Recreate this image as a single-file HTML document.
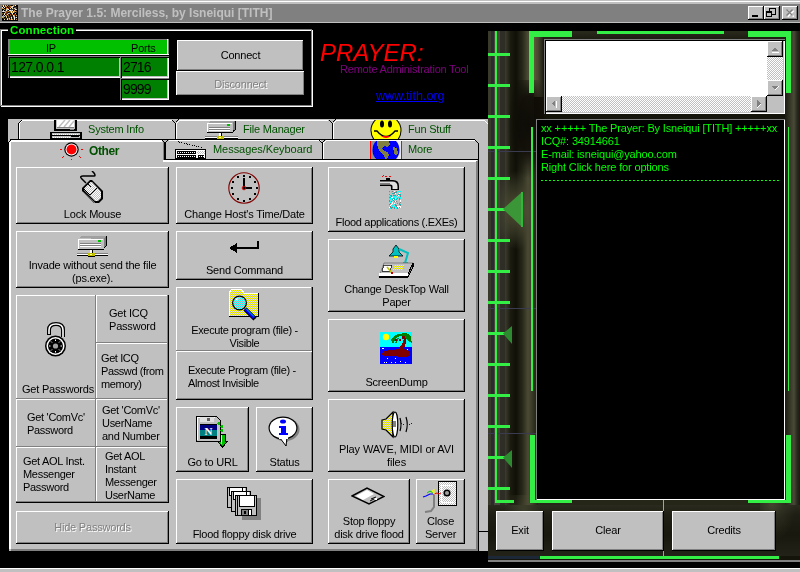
<!DOCTYPE html>
<html><head><meta charset="utf-8"><style>
html,body{margin:0;padding:0}
body{width:800px;height:572px;overflow:hidden;position:relative;background:#000;font-family:"Liberation Sans",sans-serif;font-size:11px}
body>div{position:absolute}
.t{position:absolute;will-change:transform;white-space:pre;line-height:13px;color:#000;letter-spacing:-0.2px}
.btn{background:#c0c0c0;box-shadow:inset -1px -1px 0 #000,inset 1px 1px 0 #fff,inset -2px -2px 0 #808080}
.cell{background:#c0c0c0;box-shadow:inset -1px -1px 0 #808080,inset 1px 1px 0 #fff}
.sunk{box-shadow:inset 1px 1px 0 #808080,inset 2px 2px 0 #000,inset -1px -1px 0 #fff,inset -2px -2px 0 #c0c0c0}
</style></head><body>
<div style="left:0px;top:0px;width:800px;height:1px;background:#c0c0c0;"></div>
<div style="left:0px;top:1px;width:800px;height:1px;background:#ffffff;"></div>
<div style="left:0px;top:2px;width:800px;height:2px;background:#c0c0c0;"></div>
<div style="left:0px;top:4px;width:800px;height:18px;background:#808080;"></div>
<div style="left:0px;top:22px;width:800px;height:1px;background:#c0c0c0;"></div>
<div style="left:0px;top:568px;width:800px;height:1px;background:#ffffff;"></div>
<div style="left:0px;top:569px;width:800px;height:3px;background:#c0c0c0;"></div>
<svg style="position:absolute;left:2px;top:5px" width="16" height="16" viewBox="0 0 16 16" shape-rendering="crispEdges"><rect width="16" height="16" fill="#000"/><rect x="0" y="0" width="1" height="1" fill="#7a5a20"/><rect x="0" y="1" width="1" height="1" fill="#1a1008"/><rect x="0" y="2" width="1" height="1" fill="#f0f0f0"/><rect x="0" y="3" width="1" height="1" fill="#d09030"/><rect x="0" y="4" width="1" height="1" fill="#000000"/><rect x="0" y="5" width="1" height="1" fill="#000000"/><rect x="0" y="6" width="1" height="1" fill="#c0c0c0"/><rect x="0" y="7" width="1" height="1" fill="#000000"/><rect x="0" y="8" width="1" height="1" fill="#7a5a20"/><rect x="0" y="9" width="1" height="1" fill="#402810"/><rect x="0" y="10" width="1" height="1" fill="#000000"/><rect x="0" y="11" width="1" height="1" fill="#c0c0c0"/><rect x="0" y="12" width="1" height="1" fill="#c8b048"/><rect x="0" y="13" width="1" height="1" fill="#000000"/><rect x="0" y="14" width="1" height="1" fill="#000000"/><rect x="1" y="0" width="1" height="1" fill="#f0f0f0"/><rect x="1" y="1" width="1" height="1" fill="#f0f0f0"/><rect x="1" y="2" width="1" height="1" fill="#000000"/><rect x="1" y="3" width="1" height="1" fill="#c8b048"/><rect x="1" y="4" width="1" height="1" fill="#000000"/><rect x="1" y="5" width="1" height="1" fill="#c0c0c0"/><rect x="1" y="6" width="1" height="1" fill="#f0f0f0"/><rect x="1" y="7" width="1" height="1" fill="#000000"/><rect x="1" y="8" width="1" height="1" fill="#402810"/><rect x="1" y="9" width="1" height="1" fill="#000000"/><rect x="1" y="10" width="1" height="1" fill="#c8b048"/><rect x="1" y="11" width="1" height="1" fill="#d09030"/><rect x="1" y="12" width="1" height="1" fill="#d09030"/><rect x="1" y="13" width="1" height="1" fill="#402810"/><rect x="1" y="14" width="1" height="1" fill="#000000"/><rect x="2" y="0" width="1" height="1" fill="#402810"/><rect x="2" y="1" width="1" height="1" fill="#402810"/><rect x="2" y="2" width="1" height="1" fill="#f0f0f0"/><rect x="2" y="3" width="1" height="1" fill="#000000"/><rect x="2" y="4" width="1" height="1" fill="#c8b048"/><rect x="2" y="5" width="1" height="1" fill="#000000"/><rect x="2" y="6" width="1" height="1" fill="#c0c0c0"/><rect x="2" y="7" width="1" height="1" fill="#1a1008"/><rect x="2" y="8" width="1" height="1" fill="#e8e0a0"/><rect x="2" y="9" width="1" height="1" fill="#f0f0f0"/><rect x="2" y="10" width="1" height="1" fill="#1a1008"/><rect x="2" y="11" width="1" height="1" fill="#c0c0c0"/><rect x="2" y="12" width="1" height="1" fill="#000000"/><rect x="2" y="13" width="1" height="1" fill="#402810"/><rect x="2" y="14" width="1" height="1" fill="#e8e0a0"/><rect x="3" y="0" width="1" height="1" fill="#c0c0c0"/><rect x="3" y="1" width="1" height="1" fill="#d09030"/><rect x="3" y="2" width="1" height="1" fill="#1a1008"/><rect x="3" y="3" width="1" height="1" fill="#000000"/><rect x="3" y="4" width="1" height="1" fill="#402810"/><rect x="3" y="5" width="1" height="1" fill="#402810"/><rect x="3" y="6" width="1" height="1" fill="#d09030"/><rect x="3" y="7" width="1" height="1" fill="#c8b048"/><rect x="3" y="8" width="1" height="1" fill="#7a5a20"/><rect x="3" y="9" width="1" height="1" fill="#000000"/><rect x="3" y="10" width="1" height="1" fill="#c0c0c0"/><rect x="3" y="11" width="1" height="1" fill="#303040"/><rect x="3" y="12" width="1" height="1" fill="#000000"/><rect x="3" y="13" width="1" height="1" fill="#402810"/><rect x="3" y="14" width="1" height="1" fill="#000000"/><rect x="4" y="0" width="1" height="1" fill="#402810"/><rect x="4" y="1" width="1" height="1" fill="#c8b048"/><rect x="4" y="2" width="1" height="1" fill="#a03010"/><rect x="4" y="3" width="1" height="1" fill="#d09030"/><rect x="4" y="4" width="1" height="1" fill="#c0c0c0"/><rect x="4" y="5" width="1" height="1" fill="#f0f0f0"/><rect x="4" y="6" width="1" height="1" fill="#7a5a20"/><rect x="4" y="7" width="1" height="1" fill="#a03010"/><rect x="4" y="8" width="1" height="1" fill="#402810"/><rect x="4" y="9" width="1" height="1" fill="#a03010"/><rect x="4" y="10" width="1" height="1" fill="#7a5a20"/><rect x="4" y="11" width="1" height="1" fill="#e8e0a0"/><rect x="4" y="12" width="1" height="1" fill="#c8b048"/><rect x="4" y="13" width="1" height="1" fill="#1a1008"/><rect x="4" y="14" width="1" height="1" fill="#303040"/><rect x="5" y="0" width="1" height="1" fill="#c8b048"/><rect x="5" y="1" width="1" height="1" fill="#000000"/><rect x="5" y="2" width="1" height="1" fill="#402810"/><rect x="5" y="3" width="1" height="1" fill="#e8e0a0"/><rect x="5" y="4" width="1" height="1" fill="#c0c0c0"/><rect x="5" y="5" width="1" height="1" fill="#a03010"/><rect x="5" y="6" width="1" height="1" fill="#7a5a20"/><rect x="5" y="7" width="1" height="1" fill="#303040"/><rect x="5" y="8" width="1" height="1" fill="#a03010"/><rect x="5" y="9" width="1" height="1" fill="#e8e0a0"/><rect x="5" y="10" width="1" height="1" fill="#402810"/><rect x="5" y="11" width="1" height="1" fill="#000000"/><rect x="5" y="12" width="1" height="1" fill="#000000"/><rect x="5" y="13" width="1" height="1" fill="#c0c0c0"/><rect x="5" y="14" width="1" height="1" fill="#f0f0f0"/><rect x="6" y="0" width="1" height="1" fill="#1a1008"/><rect x="6" y="1" width="1" height="1" fill="#7a5a20"/><rect x="6" y="2" width="1" height="1" fill="#1a1008"/><rect x="6" y="3" width="1" height="1" fill="#a03010"/><rect x="6" y="4" width="1" height="1" fill="#f0f0f0"/><rect x="6" y="5" width="1" height="1" fill="#000000"/><rect x="6" y="6" width="1" height="1" fill="#d09030"/><rect x="6" y="7" width="1" height="1" fill="#000000"/><rect x="6" y="8" width="1" height="1" fill="#c0c0c0"/><rect x="6" y="9" width="1" height="1" fill="#402810"/><rect x="6" y="10" width="1" height="1" fill="#7a5a20"/><rect x="6" y="11" width="1" height="1" fill="#7a5a20"/><rect x="6" y="12" width="1" height="1" fill="#303040"/><rect x="6" y="13" width="1" height="1" fill="#7a5a20"/><rect x="6" y="14" width="1" height="1" fill="#402810"/><rect x="7" y="0" width="1" height="1" fill="#a03010"/><rect x="7" y="1" width="1" height="1" fill="#402810"/><rect x="7" y="2" width="1" height="1" fill="#a03010"/><rect x="7" y="3" width="1" height="1" fill="#000000"/><rect x="7" y="4" width="1" height="1" fill="#000000"/><rect x="7" y="5" width="1" height="1" fill="#e8e0a0"/><rect x="7" y="6" width="1" height="1" fill="#a03010"/><rect x="7" y="7" width="1" height="1" fill="#303040"/><rect x="7" y="8" width="1" height="1" fill="#d09030"/><rect x="7" y="9" width="1" height="1" fill="#000000"/><rect x="7" y="10" width="1" height="1" fill="#000000"/><rect x="7" y="11" width="1" height="1" fill="#303040"/><rect x="7" y="12" width="1" height="1" fill="#303040"/><rect x="7" y="13" width="1" height="1" fill="#e8e0a0"/><rect x="7" y="14" width="1" height="1" fill="#d09030"/><rect x="8" y="0" width="1" height="1" fill="#402810"/><rect x="8" y="1" width="1" height="1" fill="#d09030"/><rect x="8" y="2" width="1" height="1" fill="#a03010"/><rect x="8" y="3" width="1" height="1" fill="#e8e0a0"/><rect x="8" y="4" width="1" height="1" fill="#303040"/><rect x="8" y="5" width="1" height="1" fill="#f0f0f0"/><rect x="8" y="6" width="1" height="1" fill="#d09030"/><rect x="8" y="7" width="1" height="1" fill="#7a5a20"/><rect x="8" y="8" width="1" height="1" fill="#000000"/><rect x="8" y="9" width="1" height="1" fill="#a03010"/><rect x="8" y="10" width="1" height="1" fill="#7a5a20"/><rect x="8" y="11" width="1" height="1" fill="#1a1008"/><rect x="8" y="12" width="1" height="1" fill="#402810"/><rect x="8" y="13" width="1" height="1" fill="#000000"/><rect x="8" y="14" width="1" height="1" fill="#a03010"/><rect x="9" y="0" width="1" height="1" fill="#000000"/><rect x="9" y="1" width="1" height="1" fill="#c8b048"/><rect x="9" y="2" width="1" height="1" fill="#e8e0a0"/><rect x="9" y="3" width="1" height="1" fill="#1a1008"/><rect x="9" y="4" width="1" height="1" fill="#303040"/><rect x="9" y="5" width="1" height="1" fill="#c8b048"/><rect x="9" y="6" width="1" height="1" fill="#f0f0f0"/><rect x="9" y="7" width="1" height="1" fill="#f0f0f0"/><rect x="9" y="8" width="1" height="1" fill="#a03010"/><rect x="9" y="9" width="1" height="1" fill="#000000"/><rect x="9" y="10" width="1" height="1" fill="#1a1008"/><rect x="9" y="11" width="1" height="1" fill="#a03010"/><rect x="9" y="12" width="1" height="1" fill="#f0f0f0"/><rect x="9" y="13" width="1" height="1" fill="#c0c0c0"/><rect x="9" y="14" width="1" height="1" fill="#e8e0a0"/><rect x="10" y="0" width="1" height="1" fill="#1a1008"/><rect x="10" y="1" width="1" height="1" fill="#f0f0f0"/><rect x="10" y="2" width="1" height="1" fill="#c0c0c0"/><rect x="10" y="3" width="1" height="1" fill="#e8e0a0"/><rect x="10" y="4" width="1" height="1" fill="#303040"/><rect x="10" y="5" width="1" height="1" fill="#f0f0f0"/><rect x="10" y="6" width="1" height="1" fill="#7a5a20"/><rect x="10" y="7" width="1" height="1" fill="#d09030"/><rect x="10" y="8" width="1" height="1" fill="#f0f0f0"/><rect x="10" y="9" width="1" height="1" fill="#c8b048"/><rect x="10" y="10" width="1" height="1" fill="#1a1008"/><rect x="10" y="11" width="1" height="1" fill="#000000"/><rect x="10" y="12" width="1" height="1" fill="#1a1008"/><rect x="10" y="13" width="1" height="1" fill="#1a1008"/><rect x="10" y="14" width="1" height="1" fill="#c8b048"/><rect x="11" y="0" width="1" height="1" fill="#d09030"/><rect x="11" y="1" width="1" height="1" fill="#c8b048"/><rect x="11" y="2" width="1" height="1" fill="#000000"/><rect x="11" y="3" width="1" height="1" fill="#a03010"/><rect x="11" y="4" width="1" height="1" fill="#402810"/><rect x="11" y="5" width="1" height="1" fill="#1a1008"/><rect x="11" y="6" width="1" height="1" fill="#e8e0a0"/><rect x="11" y="7" width="1" height="1" fill="#e8e0a0"/><rect x="11" y="8" width="1" height="1" fill="#000000"/><rect x="11" y="9" width="1" height="1" fill="#1a1008"/><rect x="11" y="10" width="1" height="1" fill="#f0f0f0"/><rect x="11" y="11" width="1" height="1" fill="#c0c0c0"/><rect x="11" y="12" width="1" height="1" fill="#7a5a20"/><rect x="11" y="13" width="1" height="1" fill="#402810"/><rect x="11" y="14" width="1" height="1" fill="#402810"/><rect x="12" y="0" width="1" height="1" fill="#7a5a20"/><rect x="12" y="1" width="1" height="1" fill="#1a1008"/><rect x="12" y="2" width="1" height="1" fill="#303040"/><rect x="12" y="3" width="1" height="1" fill="#c0c0c0"/><rect x="12" y="4" width="1" height="1" fill="#402810"/><rect x="12" y="5" width="1" height="1" fill="#d09030"/><rect x="12" y="6" width="1" height="1" fill="#d09030"/><rect x="12" y="7" width="1" height="1" fill="#303040"/><rect x="12" y="8" width="1" height="1" fill="#000000"/><rect x="12" y="9" width="1" height="1" fill="#a03010"/><rect x="12" y="10" width="1" height="1" fill="#d09030"/><rect x="12" y="11" width="1" height="1" fill="#c0c0c0"/><rect x="12" y="12" width="1" height="1" fill="#f0f0f0"/><rect x="12" y="13" width="1" height="1" fill="#f0f0f0"/><rect x="12" y="14" width="1" height="1" fill="#f0f0f0"/><rect x="13" y="0" width="1" height="1" fill="#f0f0f0"/><rect x="13" y="1" width="1" height="1" fill="#000000"/><rect x="13" y="2" width="1" height="1" fill="#a03010"/><rect x="13" y="3" width="1" height="1" fill="#d09030"/><rect x="13" y="4" width="1" height="1" fill="#f0f0f0"/><rect x="13" y="5" width="1" height="1" fill="#000000"/><rect x="13" y="6" width="1" height="1" fill="#c8b048"/><rect x="13" y="7" width="1" height="1" fill="#000000"/><rect x="13" y="8" width="1" height="1" fill="#c8b048"/><rect x="13" y="9" width="1" height="1" fill="#a03010"/><rect x="13" y="10" width="1" height="1" fill="#1a1008"/><rect x="13" y="11" width="1" height="1" fill="#000000"/><rect x="13" y="12" width="1" height="1" fill="#7a5a20"/><rect x="13" y="13" width="1" height="1" fill="#402810"/><rect x="13" y="14" width="1" height="1" fill="#000000"/><rect x="14" y="0" width="1" height="1" fill="#000000"/><rect x="14" y="1" width="1" height="1" fill="#000000"/><rect x="14" y="2" width="1" height="1" fill="#402810"/><rect x="14" y="3" width="1" height="1" fill="#1a1008"/><rect x="14" y="4" width="1" height="1" fill="#c0c0c0"/><rect x="14" y="5" width="1" height="1" fill="#000000"/><rect x="14" y="6" width="1" height="1" fill="#7a5a20"/><rect x="14" y="7" width="1" height="1" fill="#402810"/><rect x="14" y="8" width="1" height="1" fill="#000000"/><rect x="14" y="9" width="1" height="1" fill="#000000"/><rect x="14" y="10" width="1" height="1" fill="#c8b048"/><rect x="14" y="11" width="1" height="1" fill="#402810"/><rect x="14" y="12" width="1" height="1" fill="#f0f0f0"/><rect x="14" y="13" width="1" height="1" fill="#1a1008"/><rect x="14" y="14" width="1" height="1" fill="#d09030"/></svg>
<div class="t" style="left:21px;top:6px;font-weight:bold;font-size:12px;color:#c0c0c0;letter-spacing:0;line-height:15px">The Prayer 1.5: Merciless, by Isneiqui [TITH]</div>
<div class="btn" style="left:748px;top:6px;width:16px;height:14px"></div>
<div class="btn" style="left:764px;top:6px;width:16px;height:14px"></div>
<div class="btn" style="left:782px;top:6px;width:16px;height:14px"></div>
<svg style="position:absolute;left:748px;top:6px" width="16" height="14" viewBox="0 0 16 14" shape-rendering="crispEdges"><rect x="4" y="9" width="6" height="2" fill="#000"/></svg>
<svg style="position:absolute;left:764px;top:6px" width="16" height="14" viewBox="0 0 16 14" shape-rendering="crispEdges"><rect x="5" y="2" width="6" height="6" fill="none" stroke="#000" stroke-width="1" transform="translate(0.5,0.5)"/><rect x="5" y="2" width="6" height="1" fill="#000"/><rect x="2" y="5" width="6" height="6" fill="#c0c0c0"/><rect x="2.5" y="5.5" width="5" height="5" fill="none" stroke="#000"/><rect x="2" y="5" width="6" height="2" fill="#000"/></svg>
<svg style="position:absolute;left:782px;top:6px" width="16" height="14" viewBox="0 0 16 14" shape-rendering="crispEdges"><path d="M5 4 L11 10 M11 4 L5 10" stroke="#fff" stroke-width="1.4" transform="translate(0.8,0.8)" shape-rendering="auto"/><path d="M4 3 L10 9 M10 3 L4 9" stroke="#808080" stroke-width="1.4" shape-rendering="auto" transform="translate(0.5,0.5)"/></svg>
<div style="left:0px;top:29px;width:312px;height:1px;background:#808080;"></div>
<div style="left:1px;top:30px;width:312px;height:1px;background:#ffffff;"></div>
<div style="left:0px;top:29px;width:1px;height:77px;background:#808080;"></div>
<div style="left:1px;top:30px;width:1px;height:77px;background:#ffffff;"></div>
<div style="left:311px;top:29px;width:1px;height:77px;background:#808080;"></div>
<div style="left:312px;top:30px;width:1px;height:77px;background:#ffffff;"></div>
<div style="left:0px;top:105px;width:312px;height:1px;background:#808080;"></div>
<div style="left:1px;top:106px;width:312px;height:1px;background:#ffffff;"></div>
<div style="left:8px;top:24px;width:68px;height:12px;background:#000;"></div>
<div class="t" style="left:10px;top:24px;font-weight:bold;font-size:11.5px;color:#00ff00;letter-spacing:0.1px;line-height:13px">Connection</div>
<div style="left:8px;top:39px;width:161px;height:16px;background:#808080;"></div>
<div style="left:10px;top:40px;width:157px;height:14px;background:#00c000;"></div>
<div style="left:8px;top:54px;width:161px;height:1px;background:#ffffff;"></div>
<div style="left:167px;top:39px;width:1px;height:16px;background:#ffffff;"></div>
<div class="t" style="left:46px;top:42px;color:#000">IP</div>
<div class="t" style="left:131px;top:42px;color:#000">Ports</div>
<div class="sunk" style="left:8px;top:56px;width:113px;height:22px;background:#008000"></div>
<div class="sunk" style="left:120px;top:56px;width:49px;height:22px;background:#008000"></div>
<div class="sunk" style="left:120px;top:78px;width:49px;height:22px;background:#008000"></div>
<div class="t" style="left:11px;top:60px;font-size:14px;line-height:15px;letter-spacing:-0.6px">127.0.0.1</div>
<div class="t" style="left:123px;top:60px;font-size:14px;line-height:15px;letter-spacing:-0.9px">2716</div>
<div class="t" style="left:123px;top:82px;font-size:14px;line-height:15px;letter-spacing:-0.9px">9999</div>
<div class="btn" style="left:177px;top:40px;width:127px;height:31px"></div>
<div class="t" style="left:177px;top:49px;width:127px;text-align:center;">Connect</div>
<div class="btn" style="left:176px;top:71px;width:129px;height:25px"></div>
<div class="t" style="left:176px;top:78px;width:129px;text-align:center;color:#808080;text-shadow:1px 1px 0 #fff">Disconnect</div>
<div class="t" style="left:320px;top:40px;font-size:24px;font-style:italic;color:#ff0000;line-height:26px;letter-spacing:0">PRAYER:</div>
<div class="t" style="left:340px;top:63px;color:#800080;font-size:11px;letter-spacing:-0.2px">Remote Administration Tool</div>
<div class="t" style="left:376px;top:89px;color:#0000ff;font-size:12.6px;line-height:14px;text-decoration:underline;letter-spacing:0">www.tith.org</div>
<div style="left:8px;top:119px;width:481px;height:432px;background:#c0c0c0;"></div>
<div style="left:21px;top:120px;width:1px;height:1px;background:#000;"></div>
<div style="left:20px;top:121px;width:1px;height:1px;background:#000;"></div>
<div style="left:19px;top:122px;width:1px;height:1px;background:#000;"></div>
<div style="left:18px;top:123px;width:1px;height:16px;background:#000;"></div>
<div style="left:22px;top:120px;width:1px;height:1px;background:#fff;"></div>
<div style="left:21px;top:121px;width:1px;height:1px;background:#fff;"></div>
<div style="left:20px;top:122px;width:1px;height:1px;background:#fff;"></div>
<div style="left:19px;top:123px;width:1px;height:16px;background:#fff;"></div>
<div style="left:22px;top:120px;width:150px;height:1px;background:#fff;"></div>
<div style="left:175px;top:123px;width:1px;height:16px;background:#000;"></div>
<div style="left:176px;top:123px;width:1px;height:16px;background:#fff;"></div>
<div style="left:172px;top:120px;width:1px;height:1px;background:#000;"></div>
<div style="left:173px;top:121px;width:1px;height:1px;background:#000;"></div>
<div style="left:174px;top:122px;width:1px;height:1px;background:#000;"></div>
<div style="left:179px;top:120px;width:1px;height:1px;background:#fff;"></div>
<div style="left:178px;top:121px;width:1px;height:1px;background:#fff;"></div>
<div style="left:177px;top:122px;width:1px;height:1px;background:#fff;"></div>
<div style="left:178px;top:119px;width:1px;height:1px;background:#000;"></div>
<div style="left:177px;top:120px;width:1px;height:1px;background:#000;"></div>
<div style="left:176px;top:121px;width:1px;height:1px;background:#000;"></div>
<div style="left:180px;top:120px;width:148px;height:1px;background:#fff;"></div>
<div style="left:332px;top:123px;width:1px;height:16px;background:#000;"></div>
<div style="left:333px;top:123px;width:1px;height:16px;background:#fff;"></div>
<div style="left:329px;top:120px;width:1px;height:1px;background:#000;"></div>
<div style="left:330px;top:121px;width:1px;height:1px;background:#000;"></div>
<div style="left:331px;top:122px;width:1px;height:1px;background:#000;"></div>
<div style="left:336px;top:120px;width:1px;height:1px;background:#fff;"></div>
<div style="left:335px;top:121px;width:1px;height:1px;background:#fff;"></div>
<div style="left:334px;top:122px;width:1px;height:1px;background:#fff;"></div>
<div style="left:335px;top:119px;width:1px;height:1px;background:#000;"></div>
<div style="left:334px;top:120px;width:1px;height:1px;background:#000;"></div>
<div style="left:333px;top:121px;width:1px;height:1px;background:#000;"></div>
<div style="left:337px;top:120px;width:147px;height:1px;background:#fff;"></div>
<div style="left:484px;top:120px;width:1px;height:1px;background:#fff;"></div>
<div style="left:485px;top:121px;width:1px;height:1px;background:#fff;"></div>
<div style="left:486px;top:122px;width:1px;height:1px;background:#fff;"></div>
<div style="left:487px;top:123px;width:1px;height:1px;background:#fff;"></div>
<div style="left:10px;top:139px;width:465px;height:1px;background:#000;"></div>
<div style="left:8px;top:143px;width:1px;height:408px;background:#000;"></div>
<div style="left:8px;top:142px;width:1px;height:1px;background:#000;"></div>
<div style="left:9px;top:141px;width:1px;height:1px;background:#000;"></div>
<div style="left:10px;top:140px;width:1px;height:1px;background:#000;"></div>
<div style="left:11px;top:139px;width:1px;height:1px;background:#000;"></div>
<div style="left:12px;top:140px;width:150px;height:2px;background:#fff;"></div>
<div style="left:9px;top:142px;width:1px;height:1px;background:#fff;"></div>
<div style="left:10px;top:141px;width:1px;height:1px;background:#fff;"></div>
<div style="left:11px;top:140px;width:1px;height:1px;background:#fff;"></div>
<div style="left:10px;top:142px;width:1px;height:1px;background:#fff;"></div>
<div style="left:11px;top:141px;width:1px;height:1px;background:#fff;"></div>
<div style="left:9px;top:143px;width:2px;height:406px;background:#fff;"></div>
<div style="left:163px;top:142px;width:1px;height:19px;background:#808080;"></div>
<div style="left:164px;top:142px;width:1px;height:18px;background:#000;"></div>
<div style="left:161px;top:139px;width:1px;height:1px;background:#000;"></div>
<div style="left:162px;top:140px;width:1px;height:1px;background:#000;"></div>
<div style="left:163px;top:141px;width:1px;height:1px;background:#000;"></div>
<div style="left:168px;top:139px;width:1px;height:1px;background:#000;"></div>
<div style="left:167px;top:140px;width:1px;height:1px;background:#000;"></div>
<div style="left:166px;top:141px;width:1px;height:1px;background:#000;"></div>
<div style="left:165px;top:142px;width:1px;height:18px;background:#000;"></div>
<div style="left:169px;top:140px;width:152px;height:1px;background:#fff;"></div>
<div style="left:322px;top:142px;width:1px;height:18px;background:#000;"></div>
<div style="left:323px;top:142px;width:1px;height:18px;background:#fff;"></div>
<div style="left:319px;top:140px;width:1px;height:1px;background:#000;"></div>
<div style="left:320px;top:141px;width:1px;height:1px;background:#000;"></div>
<div style="left:321px;top:142px;width:1px;height:1px;background:#000;"></div>
<div style="left:326px;top:140px;width:1px;height:1px;background:#fff;"></div>
<div style="left:325px;top:141px;width:1px;height:1px;background:#fff;"></div>
<div style="left:324px;top:142px;width:1px;height:1px;background:#fff;"></div>
<div style="left:325px;top:139px;width:1px;height:1px;background:#000;"></div>
<div style="left:324px;top:140px;width:1px;height:1px;background:#000;"></div>
<div style="left:323px;top:141px;width:1px;height:1px;background:#000;"></div>
<div style="left:327px;top:140px;width:148px;height:1px;background:#fff;"></div>
<div style="left:475px;top:140px;width:1px;height:1px;background:#000;"></div>
<div style="left:476px;top:141px;width:1px;height:1px;background:#000;"></div>
<div style="left:477px;top:142px;width:1px;height:1px;background:#000;"></div>
<div style="left:478px;top:143px;width:1px;height:17px;background:#000;"></div>
<div style="left:165px;top:159px;width:314px;height:1px;background:#000;"></div>
<div style="left:163px;top:160px;width:314px;height:2px;background:#fff;"></div>
<div style="left:11px;top:549px;width:466px;height:2px;background:#808080;"></div>
<div style="left:9px;top:551px;width:470px;height:1px;background:#000;"></div>
<div style="left:476px;top:161px;width:2px;height:390px;background:#808080;"></div>
<div style="left:478px;top:160px;width:1px;height:392px;background:#000;"></div>
<div style="left:479px;top:531px;width:10px;height:1px;background:#000;"></div>
<div style="left:479px;top:552px;width:10px;height:1px;background:#000;"></div>
<div class="t" style="left:88px;top:123px;color:#005000">System Info</div>
<div class="t" style="left:243px;top:123px;color:#005000">File Manager</div>
<div class="t" style="left:408px;top:123px;color:#005000">Fun Stuff</div>
<div class="t" style="left:89px;top:145px;color:#005000;font-weight:bold;font-size:12px;letter-spacing:-0.4px">Other</div>
<div class="t" style="left:213px;top:143px;color:#005000;letter-spacing:-0.05px">Messages/Keyboard</div>
<div class="t" style="left:408px;top:143px;color:#005000">More</div>
<div class="btn" style="left:16px;top:167px;width:153px;height:57px"></div>
<div class="t" style="left:16px;top:208px;width:153px;text-align:center;">Lock Mouse</div>
<div class="btn" style="left:16px;top:231px;width:153px;height:57px"></div>
<div class="t" style="left:16px;top:259px;width:153px;text-align:center;">Invade without send the file
(ps.exe).</div>
<div class="btn" style="left:16px;top:295px;width:153px;height:208px"></div>
<div class="cell" style="left:16px;top:295px;width:80px;height:104px"></div>
<div class="cell" style="left:96px;top:295px;width:72px;height:48px"></div>
<div class="cell" style="left:96px;top:343px;width:72px;height:56px"></div>
<div class="cell" style="left:16px;top:399px;width:80px;height:48px"></div>
<div class="cell" style="left:96px;top:399px;width:72px;height:48px"></div>
<div class="cell" style="left:16px;top:447px;width:80px;height:55px"></div>
<div class="cell" style="left:96px;top:447px;width:72px;height:55px"></div>
<div style="left:16px;top:502px;width:153px;height:1px;background:#000;"></div>
<div style="left:168px;top:295px;width:1px;height:208px;background:#000;"></div>
<div class="t" style="left:22px;top:383px;">Get Passwords</div>
<div class="t" style="left:109px;top:307px;">Get ICQ
Password</div>
<div class="t" style="left:101px;top:352px;letter-spacing:-0.4px">Get ICQ
Passwd (from
memory)</div>
<div class="t" style="left:27px;top:411px;letter-spacing:-0.3px">Get 'ComVc'
Password</div>
<div class="t" style="left:102px;top:404px;letter-spacing:-0.3px">Get 'ComVc'
UserName
and Number</div>
<div class="t" style="left:23px;top:455px;letter-spacing:-0.3px">Get AOL Inst.
Messenger
Password</div>
<div class="t" style="left:105px;top:450px;letter-spacing:-0.3px">Get AOL
Instant
Messenger
UserName</div>
<div class="btn" style="left:16px;top:511px;width:153px;height:33px"></div>
<div class="t" style="left:16px;top:521px;width:153px;text-align:center;color:#808080;text-shadow:1px 1px 0 #fff">Hide Passwords</div>
<div class="btn" style="left:176px;top:167px;width:137px;height:57px"></div>
<div class="t" style="left:176px;top:208px;width:137px;text-align:center;">Change Host's Time/Date</div>
<div class="btn" style="left:176px;top:231px;width:137px;height:49px"></div>
<div class="t" style="left:176px;top:264px;width:137px;text-align:center;">Send Command</div>
<div class="btn" style="left:176px;top:287px;width:137px;height:113px"></div>
<div class="cell" style="left:176px;top:287px;width:136px;height:64px"></div>
<div style="left:176px;top:350px;width:136px;height:1px;background:#808080;"></div>
<div style="left:176px;top:351px;width:136px;height:1px;background:#fff;"></div>
<div class="t" style="left:176px;top:324px;width:137px;text-align:center;letter-spacing:-0.35px">Execute program (file) -
Visible</div>
<div class="t" style="left:188px;top:364px;letter-spacing:-0.35px">Execute Program (file) -
Almost Invisible</div>
<div class="btn" style="left:176px;top:407px;width:73px;height:65px"></div>
<div class="t" style="left:176px;top:456px;width:73px;text-align:center;">Go to URL</div>
<div class="btn" style="left:256px;top:407px;width:57px;height:65px"></div>
<div class="t" style="left:256px;top:456px;width:57px;text-align:center;">Status</div>
<div class="btn" style="left:176px;top:479px;width:137px;height:65px"></div>
<div class="t" style="left:176px;top:528px;width:137px;text-align:center;letter-spacing:-0.25px">Flood floppy disk drive</div>
<div class="btn" style="left:328px;top:167px;width:137px;height:65px"></div>
<div class="t" style="left:328px;top:216px;width:137px;text-align:center;letter-spacing:-0.3px">Flood applications (.EXEs)</div>
<div class="btn" style="left:328px;top:239px;width:137px;height:73px"></div>
<div class="t" style="left:328px;top:283px;width:137px;text-align:center;">Change DeskTop Wall
Paper</div>
<div class="btn" style="left:328px;top:319px;width:137px;height:73px"></div>
<div class="t" style="left:328px;top:376px;width:137px;text-align:center;">ScreenDump</div>
<div class="btn" style="left:328px;top:399px;width:137px;height:73px"></div>
<div class="t" style="left:328px;top:443px;width:137px;text-align:center;letter-spacing:-0.1px">Play WAVE, MIDI or AVI
files</div>
<div class="btn" style="left:328px;top:479px;width:82px;height:65px"></div>
<div class="t" style="left:328px;top:515px;width:82px;text-align:center;letter-spacing:-0.25px">Stop floppy
disk drive flood</div>
<div class="btn" style="left:416px;top:479px;width:49px;height:65px"></div>
<div class="t" style="left:416px;top:515px;width:49px;text-align:center;">Close
Server</div>
<div style="left:488px;top:31px;width:312px;height:529px;background:#14140a;"></div>
<div style="left:488px;top:31px;width:22px;height:474px;background:linear-gradient(90deg,#3a3a2c 0,#3a3a2c 3px,#2a2a30 3px,#2a2a30 6px,#46463a 6px,#46463a 12px,#2e2e26 12px,#2e2e26 17px,#3c3c2e 17px,#1e1e16 22px);"></div>
<div style="left:510px;top:31px;width:22px;height:474px;background:linear-gradient(90deg,#1c1c10 0,#101008 6px,#262618 12px,#4a4a34 18px,#3a3a28 22px);"></div>
<div style="left:532px;top:31px;width:6px;height:474px;background:linear-gradient(90deg,#3a3a28,#1a1a10);"></div>
<div style="left:785px;top:31px;width:15px;height:474px;background:linear-gradient(90deg,#1a1a10 0,#3c3c2c 6px,#4a4a38 9px,#2a2a20 12px,#1a1a12 15px);"></div>
<div style="left:538px;top:31px;width:247px;height:9px;background:linear-gradient(180deg,#2a2a1c,#1a1a10);"></div>
<div style="left:488px;top:505px;width:312px;height:51px;background:linear-gradient(180deg,#2a2a1e 0,#1e1e14 10px,#18180e 30px,#222218 51px);"></div>
<div style="left:538px;top:499px;width:247px;height:6px;background:#262618;"></div>
<div style="left:534px;top:37px;width:10px;height:60px;background:linear-gradient(90deg,#5c5838 0,#4a4632 4px,#2a2a1c 8px,#141410 10px);"></div>
<div style="left:534px;top:97px;width:10px;height:22px;background:#141008;"></div>
<div style="left:506px;top:80px;width:40px;height:110px;background:radial-gradient(ellipse 50% 50% at 55% 40%,rgba(14,12,6,1) 0,rgba(14,12,6,0.9) 50%,rgba(14,12,6,0) 100%)"></div>
<div style="left:492px;top:170px;width:42px;height:80px;background:radial-gradient(ellipse at 60% 50%,rgba(90,90,60,0.85) 0,rgba(70,70,50,0.5) 45%,rgba(0,0,0,0) 70%)"></div>
<div style="left:488px;top:151px;width:50px;height:1px;background:#3a3a50;"></div>
<div style="left:760px;top:470px;width:40px;height:80px;background:radial-gradient(ellipse 60% 50% at 30% 40%,rgba(80,80,56,0.7) 0,rgba(60,60,44,0.4) 50%,rgba(0,0,0,0) 100%)"></div>
<div style="left:500px;top:495px;width:40px;height:60px;background:radial-gradient(ellipse 50% 50% at 60% 30%,rgba(80,80,56,0.6) 0,rgba(0,0,0,0) 100%)"></div>
<div style="left:488px;top:308px;width:50px;height:1px;background:#3a3a50;"></div>
<div style="left:488px;top:433px;width:50px;height:1px;background:#3a3a50;"></div>
<div style="left:495px;top:31px;width:2px;height:472px;background:#33ee44;"></div>
<div style="left:488px;top:53px;width:22px;height:3px;background:#33ee44;"></div>
<div style="left:488px;top:84px;width:22px;height:3px;background:#33ee44;"></div>
<div style="left:488px;top:115px;width:22px;height:3px;background:#33ee44;"></div>
<div style="left:488px;top:146px;width:22px;height:3px;background:#33ee44;"></div>
<div style="left:488px;top:177px;width:22px;height:3px;background:#33ee44;"></div>
<div style="left:488px;top:208px;width:22px;height:3px;background:#33ee44;"></div>
<div style="left:488px;top:239px;width:22px;height:3px;background:#33ee44;"></div>
<div style="left:488px;top:270px;width:22px;height:3px;background:#33ee44;"></div>
<div style="left:488px;top:301px;width:22px;height:3px;background:#33ee44;"></div>
<div style="left:488px;top:332px;width:22px;height:3px;background:#33ee44;"></div>
<div style="left:488px;top:363px;width:22px;height:3px;background:#33ee44;"></div>
<div style="left:488px;top:394px;width:22px;height:3px;background:#33ee44;"></div>
<div style="left:488px;top:425px;width:22px;height:3px;background:#33ee44;"></div>
<div style="left:488px;top:456px;width:22px;height:3px;background:#33ee44;"></div>
<div style="left:488px;top:487px;width:22px;height:3px;background:#33ee44;"></div>
<div style="left:495px;top:500px;width:19px;height:3px;background:#33ee44;"></div>
<svg style="position:absolute;left:503px;top:192px" width="20" height="36" viewBox="0 0 20 36" shape-rendering="crispEdges"><path d="M0 17 L19 0 V35 Z" fill="#3a9636" shape-rendering="auto"/><rect x="18" y="0" width="1.5" height="35" fill="#2fb83a"/></svg>
<svg style="position:absolute;left:503px;top:326px" width="10" height="19" viewBox="0 0 10 19" shape-rendering="crispEdges"><path d="M0 7.5 L9 0 V18 Z" fill="#2e8a30" shape-rendering="auto"/></svg>
<svg style="position:absolute;left:503px;top:450px" width="10" height="19" viewBox="0 0 10 19" shape-rendering="crispEdges"><path d="M0 7.5 L9 0 V18 Z" fill="#2e8a30" shape-rendering="auto"/></svg>
<div style="left:529px;top:31px;width:43px;height:6px;background:#33ee44;"></div>
<div style="left:529px;top:31px;width:5px;height:62px;background:#33ee44;"></div>
<div style="left:597px;top:31px;width:127px;height:3px;background:#33ee44;"></div>
<div style="left:748px;top:31px;width:43px;height:6px;background:#33ee44;"></div>
<div style="left:786px;top:31px;width:5px;height:62px;background:#33ee44;"></div>
<div style="left:531px;top:127px;width:2px;height:264px;background:#33ee44;"></div>
<div style="left:788px;top:127px;width:1px;height:264px;background:#33ee44;"></div>
<div style="left:530px;top:435px;width:5px;height:68px;background:#33ee44;"></div>
<div style="left:530px;top:500px;width:42px;height:3px;background:#33ee44;"></div>
<div style="left:786px;top:435px;width:5px;height:68px;background:#33ee44;"></div>
<div style="left:748px;top:500px;width:43px;height:3px;background:#33ee44;"></div>
<div style="left:488px;top:556px;width:52px;height:3px;background:#1c2838;"></div>
<div style="left:540px;top:556px;width:239px;height:3px;background:#33ee44;"></div>
<div style="left:663px;top:499px;width:1px;height:58px;background:#33ee44;"></div>
<div style="left:488px;top:560px;width:312px;height:2px;background:#808080;"></div>
<div class="sunk" style="left:544px;top:39px;width:241px;height:75px;background:#fff"></div>
<div style="left:767px;top:57px;width:16px;height:23px;background:repeating-conic-gradient(#c0c0c0 0 25%,#fff 0 50%) 0 0/2px 2px;"></div>
<div style="left:562px;top:96px;width:189px;height:16px;background:repeating-conic-gradient(#c0c0c0 0 25%,#fff 0 50%) 0 0/2px 2px;"></div>
<div class="btn" style="left:767px;top:41px;width:16px;height:16px"></div>
<div class="btn" style="left:767px;top:80px;width:16px;height:16px"></div>
<div class="btn" style="left:546px;top:96px;width:16px;height:16px"></div>
<div class="btn" style="left:751px;top:96px;width:16px;height:16px"></div>
<div style="left:767px;top:96px;width:16px;height:16px;background:#c0c0c0;"></div>
<svg style="position:absolute;left:767px;top:41px" width="16" height="16" viewBox="0 0 16 16" shape-rendering="crispEdges"><path d="M4 10 H11 L7.5 6.5 Z" fill="#808080"/><rect x="5" y="11" width="7" height="1" fill="#fff"/></svg>
<svg style="position:absolute;left:767px;top:80px" width="16" height="16" viewBox="0 0 16 16" shape-rendering="crispEdges"><path d="M4 6 H11 L7.5 9.5 Z" fill="#808080"/><path d="M8 10 L12 6" stroke="#fff"/></svg>
<svg style="position:absolute;left:546px;top:96px" width="16" height="16" viewBox="0 0 16 16" shape-rendering="crispEdges"><path d="M9 4 V11 L5.5 7.5 Z" fill="#808080"/><rect x="10" y="5" width="1" height="7" fill="#fff"/></svg>
<svg style="position:absolute;left:751px;top:96px" width="16" height="16" viewBox="0 0 16 16" shape-rendering="crispEdges"><path d="M6 4 V11 L9.5 7.5 Z" fill="#808080"/><path d="M6 12 L10 8" stroke="#fff"/></svg>
<div style="left:536px;top:119px;width:249px;height:381px;background:#000;box-shadow:inset 1px 1px 0 #808080,inset -1px -1px 0 #fff"></div>
<div class="t" style="left:541px;top:122px;color:#00ff00;font-size:11px;letter-spacing:-0.15px">xx +++++ The Prayer: By Isneiqui [TITH] +++++xx</div>
<div class="t" style="left:541px;top:135px;color:#00ff00;font-size:11px;letter-spacing:-0.15px">ICQ#: 34914661</div>
<div class="t" style="left:541px;top:148px;color:#00ff00;font-size:11px;letter-spacing:-0.15px">E-mail: isneiqui@yahoo.com</div>
<div class="t" style="left:541px;top:161px;color:#00ff00;font-size:11px;letter-spacing:-0.15px">Right Click here for options</div>
<div style="left:541px;top:180px;width:239px;height:1px;background:repeating-linear-gradient(90deg,#00ff00 0 2px,transparent 2px 4px);"></div>
<div class="btn" style="left:496px;top:511px;width:48px;height:40px"></div>
<div class="t" style="left:496px;top:524px;width:48px;text-align:center;">Exit</div>
<div class="btn" style="left:552px;top:511px;width:112px;height:40px"></div>
<div class="t" style="left:552px;top:524px;width:112px;text-align:center;">Clear</div>
<div class="btn" style="left:672px;top:511px;width:104px;height:40px"></div>
<div class="t" style="left:672px;top:524px;width:104px;text-align:center;">Credits</div>
<svg width="0" height="0" style="position:absolute"><defs><pattern id="dy" width="2" height="2" patternUnits="userSpaceOnUse"><rect width="2" height="2" fill="#ffff00"/><rect width="1" height="1" fill="#c0c0c0"/><rect x="1" y="1" width="1" height="1" fill="#c0c0c0"/></pattern><pattern id="dw" width="2" height="2" patternUnits="userSpaceOnUse"><rect width="2" height="2" fill="#fff"/><rect width="1" height="1" fill="#c0c0c0"/><rect x="1" y="1" width="1" height="1" fill="#c0c0c0"/></pattern><pattern id="dc" width="2" height="2" patternUnits="userSpaceOnUse"><rect width="2" height="2" fill="#00ffff"/><rect width="1" height="1" fill="#c0c0c0"/><rect x="1" y="1" width="1" height="1" fill="#fff"/></pattern><pattern id="db" width="2" height="2" patternUnits="userSpaceOnUse"><rect width="2" height="2" fill="#0000ff"/><rect width="1" height="1" fill="#000080"/></pattern></defs></svg>
<svg style="position:absolute;left:50px;top:120px" width="32" height="19" viewBox="0 0 32 19" shape-rendering="crispEdges"><rect x="4" y="0" width="23" height="11" fill="#000"/><rect x="6" y="0" width="19" height="9" fill="#c0c0c0"/><rect x="7" y="0" width="17" height="8" fill="#fff"/><path d="M9 7 L15 0 M14 7 L20 0 M19 7 L24 1" stroke="#c0c0c0" stroke-width="1.5" shape-rendering="auto"/><rect x="7" y="7" width="17" height="1" fill="#808080"/><rect x="20" y="9" width="4" height="1" fill="#808080"/><rect x="0" y="12" width="32" height="7" fill="#000"/><rect x="2" y="13" width="28" height="2" fill="#c0c0c0"/><rect x="2" y="16" width="28" height="2" fill="#c0c0c0"/><path d="M3 14 H29 M3 17 H20" stroke="#fff" stroke-dasharray="1 1"/><rect x="21" y="16" width="8" height="1" fill="#000"/></svg>
<svg style="position:absolute;left:58px;top:140px" width="28" height="21" viewBox="0 0 28 21" shape-rendering="crispEdges"><circle cx="13.5" cy="9.5" r="7.2" fill="#000" shape-rendering="auto"/><circle cx="13.5" cy="9.5" r="6" fill="#fff" shape-rendering="auto"/><circle cx="13.5" cy="9.5" r="5" fill="#ff0000" shape-rendering="auto"/><rect x="2" y="9" width="2" height="1" fill="#f00"/><rect x="23" y="9" width="2" height="1" fill="#f00"/><path d="M4 18 L6 16 M23 18 L21 16" stroke="#f00" shape-rendering="auto"/><rect x="13" y="19" width="1" height="1" fill="#f00"/></svg>
<svg style="position:absolute;left:205px;top:121px" width="33" height="18" viewBox="0 0 33 18" shape-rendering="crispEdges"><path d="M3 2 L5 0 H30 L27 2 Z" fill="#a0a0a0"/><path d="M27 2 L30 0 V9 L27 11 Z" fill="#808080"/><path d="M30 0 V9 L27 11" stroke="#000" fill="none"/><rect x="2" y="2" width="26" height="9" fill="#c0c0c0"/><rect x="2" y="2" width="25" height="1" fill="#fff"/><rect x="2" y="2" width="1" height="9" fill="#fff"/><rect x="2" y="11" width="26" height="1" fill="#000"/><rect x="22" y="3" width="3" height="2" fill="#00c000"/><rect x="4" y="6" width="21" height="1" fill="#808080"/><rect x="4" y="8" width="21" height="1" fill="#808080"/><rect x="4" y="7" width="21" height="1" fill="#fff"/><rect x="4" y="9" width="21" height="1" fill="#fff"/><rect x="14" y="12" width="2" height="3" fill="#fff"/><rect x="16" y="12" width="1" height="3" fill="#000"/><rect x="0" y="15" width="33" height="1" fill="#808080"/><rect x="0" y="16" width="33" height="1" fill="#fff"/><rect x="0" y="17" width="33" height="1" fill="#000"/><rect x="12" y="15" width="7" height="3" fill="#c0c000"/><rect x="14" y="16" width="2" height="1" fill="#ffff80"/></svg>
<svg style="position:absolute;left:76px;top:236px" width="33" height="21" viewBox="0 0 33 21" shape-rendering="crispEdges"><path d="M3 2 L5 0 H30 L27 3 Z" fill="#a0a0a0"/><path d="M27 3 L30 0 V10 L27 13 Z" fill="#808080"/><path d="M30 0 V10 L27 13" stroke="#000" fill="none"/><rect x="2" y="3" width="26" height="10" fill="#c0c0c0"/><rect x="2" y="3" width="25" height="1" fill="#fff"/><rect x="2" y="3" width="1" height="10" fill="#fff"/><rect x="2" y="13" width="26" height="1" fill="#000"/><rect x="22" y="4" width="3" height="2" fill="#00c000"/><rect x="4" y="7" width="21" height="1" fill="#808080"/><rect x="4" y="9" width="21" height="1" fill="#808080"/><rect x="4" y="8" width="21" height="1" fill="#fff"/><rect x="4" y="10" width="21" height="1" fill="#fff"/><rect x="14" y="14" width="2" height="4" fill="#fff"/><rect x="16" y="14" width="1" height="4" fill="#000"/><rect x="1" y="17" width="31" height="1" fill="#808080"/><rect x="1" y="18" width="31" height="1" fill="#fff"/><rect x="1" y="19" width="31" height="1" fill="#000"/><rect x="12" y="17" width="7" height="3" fill="#c0c000"/><rect x="14" y="18" width="2" height="1" fill="#ffff80"/><rect x="12" y="20" width="7" height="1" fill="#000"/></svg>
<svg style="position:absolute;left:175px;top:140px" width="33" height="20" viewBox="0 0 33 20" shape-rendering="crispEdges"><path d="M3 1 L5 3 L7 2 L9 4 L11 3 L13 5 L15 4 L17 6 L19 5 L21 6 L25 6 L27 8 L27 10" stroke="#000" fill="none" stroke-dasharray="1 1"/><rect x="0" y="9" width="31" height="10" fill="#000"/><rect x="1" y="10" width="29" height="8" fill="#fff"/><rect x="2" y="11" width="19" height="3" fill="#000"/><rect x="2" y="15" width="19" height="3" fill="#000"/><rect x="23" y="15" width="6" height="3" fill="#000"/><rect x="22" y="11" width="8" height="3" fill="url(#dw)"/><path d="M3 12.5 H21 M3 16.5 H21 M24 16.5 H29" stroke="#fff" stroke-dasharray="1 1"/></svg>
<div style="left:369px;top:120px;width:34px;height:19px;overflow:hidden"><svg width="34" height="19" style="position:absolute;left:0;top:0"><circle cx="17" cy="10.5" r="15.5" fill="#000" shape-rendering="auto"/><circle cx="17" cy="10.5" r="14.5" fill="#ffff00" shape-rendering="auto"/><ellipse cx="13" cy="4" rx="2" ry="3.5" fill="#000"/><ellipse cx="21" cy="4" rx="2" ry="3.5" fill="#000"/><path d="M5 11 L8 11 Q17 22 26 11 L29 11" stroke="#000" stroke-width="1.3" fill="none" shape-rendering="auto"/><path d="M12 16 Q17 20 22 16 Z" fill="#ff0000"/></svg></div>
<svg style="position:absolute;left:369px;top:141px" width="34" height="18" viewBox="0 0 34 18" shape-rendering="crispEdges"><rect x="1" y="0" width="1" height="18" fill="#ff0000"/><rect x="32" y="0" width="1" height="18" fill="#ff0000"/><rect x="2" y="0" width="4" height="18" fill="#909090"/><rect x="27" y="0" width="5" height="18" fill="#e8e8e8"/><circle cx="17" cy="9" r="13.5" fill="url(#db)" shape-rendering="auto"/><path d="M8 0 H20 L21 3 L18 6 L15 5 L13 7 L15 10 L19 11 L20 14 L18 18 L16 18 L15 14 L11 11 L9 7 L8 3 Z" fill="#808040"/><path d="M24 6 L28 7 L29 12 L27 15 L25 12 Z" fill="#808040"/></svg>
<svg style="position:absolute;left:78px;top:171px" width="28" height="34" viewBox="0 0 28 34" shape-rendering="crispEdges"><path d="M3 7 Q2 5 5 5 H16 Q18 5 16 2 L14 0" stroke="#000" stroke-width="1.5" fill="none" shape-rendering="auto"/><path d="M3 7 L8 12" stroke="#000" stroke-width="1.5" shape-rendering="auto"/><path d="M12 9 L4 17 V20 L16 32 H21 L25 28 V20 L14 9 Z" fill="#000" shape-rendering="auto"/><path d="M12.5 11 L6 17.5 V19 L17 30 H20 L23 27 V20.5 L14 11 Z" fill="url(#dw)" shape-rendering="auto"/><path d="M6 18 L12 24 L19 17" stroke="#000" fill="none" shape-rendering="auto"/><path d="M10 13 L13 16" stroke="#000" fill="none" shape-rendering="auto"/><path d="M5 21 L17 32" stroke="#808080" fill="none" shape-rendering="auto"/></svg>
<svg style="position:absolute;left:228px;top:172px" width="32" height="32" viewBox="0 0 32 32" shape-rendering="crispEdges"><circle cx="16" cy="16" r="15.2" fill="none" stroke="#800000" stroke-width="1.1" shape-rendering="auto"/><rect x="15.0" y="2.5" width="2" height="2" fill="#000"/><rect x="21.2" y="4.2" width="2" height="2" fill="#000"/><rect x="25.8" y="8.7" width="2" height="2" fill="#000"/><rect x="27.5" y="15.0" width="2" height="2" fill="#000"/><rect x="25.8" y="21.2" width="2" height="2" fill="#000"/><rect x="21.3" y="25.8" width="2" height="2" fill="#000"/><rect x="15.0" y="27.5" width="2" height="2" fill="#000"/><rect x="8.8" y="25.8" width="2" height="2" fill="#000"/><rect x="4.2" y="21.3" width="2" height="2" fill="#000"/><rect x="2.5" y="15.0" width="2" height="2" fill="#000"/><rect x="4.2" y="8.8" width="2" height="2" fill="#000"/><rect x="8.7" y="4.2" width="2" height="2" fill="#000"/><rect x="15" y="6" width="2" height="11" fill="#000"/><rect x="15" y="15" width="9" height="2" fill="#000"/><circle cx="16" cy="16" r="1.8" fill="none" stroke="#c00000" shape-rendering="auto"/></svg>
<svg style="position:absolute;left:228px;top:240px" width="32" height="14" viewBox="0 0 32 14" shape-rendering="crispEdges"><path d="M1 8 L9 3 V13 Z" fill="#000"/><rect x="8" y="7" width="23" height="2" fill="#000"/><rect x="29" y="1" width="2" height="8" fill="#000"/></svg>
<svg style="position:absolute;left:228px;top:289px" width="32" height="33" viewBox="0 0 32 33" shape-rendering="crispEdges"><path d="M1 26 V4 L4 0 H13 L16 4 H30 V27 H1 Z" fill="url(#dy)"/><path d="M1 4 L4 0 H13 L16 4 H30" stroke="#fff" fill="none"/><rect x="1" y="4" width="1" height="23" fill="#fff"/><path d="M30.5 4 V27.5 H1" stroke="#000" fill="none"/><path d="M17 20 L27 30" stroke="#000" stroke-width="4.5" shape-rendering="auto"/><path d="M17 20 L26 29" stroke="#0000ff" stroke-width="2.5" shape-rendering="auto"/><path d="M18 19.5 L26 27.5" stroke="#00ffff" stroke-width="0.8" shape-rendering="auto"/><circle cx="11.5" cy="14" r="7.5" fill="#000" shape-rendering="auto"/><circle cx="11.5" cy="14" r="6.2" fill="url(#dc)" shape-rendering="auto"/><path d="M8 11 L10 9" stroke="#fff" stroke-width="1.5" shape-rendering="auto"/></svg>
<svg style="position:absolute;left:43px;top:322px" width="26" height="36" viewBox="0 0 26 36" shape-rendering="crispEdges"><path d="M6 13 V8 Q6 2 13 2 Q20 2 20 8 V15" stroke="#000" stroke-width="4" fill="none" shape-rendering="auto"/><path d="M6 12 V8 Q6 2 13 2 Q20 2 20 8 V15" stroke="#fff" stroke-width="1.6" fill="none" shape-rendering="auto"/><circle cx="12.5" cy="24" r="10.5" fill="#000" shape-rendering="auto"/><circle cx="12.5" cy="24" r="9" fill="#fff" shape-rendering="auto"/><circle cx="12.5" cy="24" r="7.5" fill="#000" shape-rendering="auto"/><circle cx="12.5" cy="24" r="2.6" fill="#a0a0a0" shape-rendering="auto"/><path d="M12.5 17.5 V19 M12.5 29 V30.5 M6 24 H7.5 M17.5 24 H19 M8 19.5 L9 20.5 M17 19.5 L16 20.5 M8 28.5 L9 27.5 M17 28.5 L16 27.5" stroke="#fff" stroke-width="1" shape-rendering="auto"/></svg>
<svg style="position:absolute;left:195px;top:415px" width="35" height="34" viewBox="0 0 35 34" shape-rendering="crispEdges"><path d="M1 1 H21 L25 5 V26 H1 Z" fill="#c0c0c0" stroke="#000"/><rect x="2" y="2" width="1" height="23" fill="#fff"/><rect x="2" y="2" width="18" height="1" fill="#fff"/><rect x="5" y="2" width="14" height="5" fill="#e0e0e0"/><rect x="12" y="3" width="3" height="3" fill="#606060"/><rect x="5" y="9" width="17" height="15" fill="#000"/><rect x="5" y="10" width="17" height="5" fill="#000080"/><rect x="5" y="15" width="17" height="6" fill="#008080"/><text x="13.5" y="20" font-family="Liberation Serif" font-size="11" font-weight="bold" fill="#fff" text-anchor="middle">N</text><circle cx="24" cy="8.5" r="1.5" fill="#00c000"/><circle cx="27" cy="11.5" r="1.5" fill="#00c000"/><circle cx="27" cy="15.5" r="1.5" fill="#00c000"/><path d="M25 19 H30 V26 H33 L27.5 32 L22 26 H25 Z" fill="#00c000" stroke="#000"/><rect x="26" y="20" width="1" height="9" fill="#ffff00"/></svg>
<svg style="position:absolute;left:267px;top:415px" width="34" height="33" viewBox="0 0 34 33" shape-rendering="crispEdges"><ellipse cx="18" cy="14.5" rx="14.5" ry="11.5" fill="#808080" shape-rendering="auto"/><path d="M15 23 L20 32 L21 23 Z" fill="#808080"/><ellipse cx="16" cy="13" rx="14.5" ry="11.5" fill="#000" shape-rendering="auto"/><ellipse cx="16" cy="13" rx="13.3" ry="10.3" fill="#fff" shape-rendering="auto"/><path d="M13 23 L19 31 L20 22" fill="#fff" stroke="#000" shape-rendering="auto"/><rect x="12" y="21" width="9" height="3" fill="#fff"/><ellipse cx="16" cy="6.5" rx="3" ry="2" fill="#0000ff" shape-rendering="auto"/><rect x="14" y="11" width="5" height="8" fill="#0000ff"/><rect x="12" y="11" width="3" height="1.5" fill="#0000ff"/><rect x="12" y="18" width="9" height="1.5" fill="#0000ff"/></svg>
<svg style="position:absolute;left:227px;top:487px" width="34" height="34" viewBox="0 0 34 34" shape-rendering="crispEdges"><rect x="15" y="11" width="21" height="22" fill="#808080"/><g transform="translate(0,0)"><rect x="0.5" y="0.5" width="19" height="20" fill="#c0c0c0" stroke="#000"/><rect x="2" y="1" width="14" height="7" fill="#fff" stroke="#000" stroke-width="0"/><rect x="2.5" y="0.5" width="13" height="8" fill="#fff" stroke="#000"/><rect x="16" y="1" width="2" height="5" fill="#fff"/></g><g transform="translate(4,4)"><rect x="0.5" y="0.5" width="19" height="20" fill="#c0c0c0" stroke="#000"/><rect x="2" y="1" width="14" height="7" fill="#fff" stroke="#000" stroke-width="0"/><rect x="2.5" y="0.5" width="13" height="8" fill="#fff" stroke="#000"/><rect x="16" y="1" width="2" height="5" fill="#fff"/></g><g transform="translate(8,8)"><rect x="0.5" y="0.5" width="19" height="20" fill="#c0c0c0" stroke="#000"/><rect x="2" y="1" width="14" height="7" fill="#fff" stroke="#000" stroke-width="0"/><rect x="2.5" y="0.5" width="13" height="8" fill="#fff" stroke="#000"/><rect x="16" y="1" width="2" height="5" fill="#fff"/></g><rect x="10.5" y="8.5" width="19" height="20" fill="#c0c0c0" stroke="#000"/><rect x="12.5" y="8.5" width="15" height="11" fill="#fff" stroke="#000"/><rect x="14" y="22" width="11" height="6" fill="#000"/><rect x="15" y="23" width="6" height="5" fill="#808080"/><rect x="17" y="24" width="2" height="3" fill="#000"/><rect x="22" y="23" width="2" height="5" fill="#fff"/></svg>
<svg style="position:absolute;left:378px;top:174px" width="26" height="36" viewBox="0 0 26 36" shape-rendering="crispEdges"><path d="M4 3 L6 1 L8 3 L10 1 L12 3 L14 1" stroke="#f00" fill="none" stroke-dasharray="1 1"/><path d="M2 6 H15 Q21 6 21 12 V16 H13 V13 Q13 12 12 12 H2 Z" fill="#000" shape-rendering="auto"/><path d="M2 7.5 H14 Q19.5 7.5 19.5 12.5 V15 H14.5 V12 Q14.5 10.5 12.5 10.5 H2 Z" fill="#e0e0e0" shape-rendering="auto"/><path d="M2 9 H12" stroke="#808080" stroke-width="1"/><rect x="8" y="4" width="4" height="2" fill="#000"/><rect x="15" y="28" width="1" height="1" fill="#00c0c0"/><rect x="16" y="32" width="1" height="1" fill="#00ffff"/><rect x="12" y="32" width="1" height="1" fill="#808080"/><rect x="18" y="32" width="1" height="1" fill="#fff"/><rect x="12" y="21" width="1" height="1" fill="#00ffff"/><rect x="22" y="27" width="1" height="1" fill="#fff"/><rect x="18" y="22" width="1" height="1" fill="#00c0c0"/><rect x="11" y="23" width="1" height="1" fill="#00c0c0"/><rect x="16" y="21" width="1" height="1" fill="#00c0c0"/><rect x="11" y="33" width="1" height="1" fill="#fff"/><rect x="21" y="19" width="1" height="1" fill="#fff"/><rect x="19" y="28" width="1" height="1" fill="#00ffff"/><rect x="16" y="24" width="1" height="1" fill="#00c0c0"/><rect x="19" y="33" width="1" height="1" fill="#fff"/><rect x="21" y="24" width="1" height="1" fill="#00c0c0"/><rect x="14" y="24" width="1" height="1" fill="#808080"/><rect x="22" y="24" width="1" height="1" fill="#00ffff"/><rect x="19" y="32" width="1" height="1" fill="#fff"/><rect x="22" y="17" width="1" height="1" fill="#00ffff"/><rect x="15" y="32" width="1" height="1" fill="#fff"/><rect x="14" y="28" width="1" height="1" fill="#808080"/><rect x="22" y="28" width="1" height="1" fill="#fff"/><rect x="12" y="24" width="1" height="1" fill="#00ffff"/><rect x="14" y="32" width="1" height="1" fill="#00ffff"/><rect x="16" y="23" width="1" height="1" fill="#808080"/><rect x="20" y="17" width="1" height="1" fill="#808080"/><rect x="21" y="28" width="1" height="1" fill="#00ffff"/><rect x="21" y="20" width="1" height="1" fill="#808080"/><rect x="22" y="23" width="1" height="1" fill="#808080"/><rect x="13" y="30" width="1" height="1" fill="#fff"/><rect x="12" y="29" width="1" height="1" fill="#808080"/><rect x="17" y="19" width="1" height="1" fill="#00ffff"/><rect x="13" y="21" width="1" height="1" fill="#00ffff"/><rect x="13" y="31" width="1" height="1" fill="#00ffff"/><rect x="20" y="32" width="1" height="1" fill="#fff"/><rect x="13" y="34" width="1" height="1" fill="#00c0c0"/><rect x="13" y="17" width="1" height="1" fill="#00ffff"/><rect x="22" y="20" width="1" height="1" fill="#00c0c0"/><rect x="22" y="21" width="1" height="1" fill="#808080"/><rect x="14" y="23" width="1" height="1" fill="#00ffff"/><rect x="15" y="23" width="1" height="1" fill="#fff"/><rect x="19" y="24" width="1" height="1" fill="#00c0c0"/><rect x="16" y="25" width="1" height="1" fill="#00c0c0"/><rect x="17" y="21" width="1" height="1" fill="#00ffff"/><rect x="22" y="28" width="1" height="1" fill="#808080"/><rect x="21" y="33" width="1" height="1" fill="#808080"/><rect x="19" y="21" width="1" height="1" fill="#00c0c0"/><rect x="13" y="33" width="1" height="1" fill="#00c0c0"/><rect x="11" y="31" width="1" height="1" fill="#00ffff"/><rect x="20" y="17" width="1" height="1" fill="#00ffff"/><rect x="13" y="21" width="1" height="1" fill="#808080"/><rect x="20" y="20" width="1" height="1" fill="#00c0c0"/><rect x="11" y="27" width="1" height="1" fill="#00c0c0"/><rect x="19" y="34" width="1" height="1" fill="#808080"/><rect x="12" y="34" width="1" height="1" fill="#00ffff"/><rect x="14" y="23" width="1" height="1" fill="#fff"/><rect x="11" y="20" width="1" height="1" fill="#00c0c0"/><rect x="18" y="34" width="1" height="1" fill="#00ffff"/><rect x="12" y="31" width="1" height="1" fill="#fff"/><rect x="20" y="33" width="1" height="1" fill="#00c0c0"/><rect x="19" y="23" width="1" height="1" fill="#fff"/><rect x="18" y="33" width="1" height="1" fill="#00c0c0"/><rect x="18" y="33" width="1" height="1" fill="#00ffff"/><rect x="22" y="33" width="1" height="1" fill="#fff"/><rect x="19" y="23" width="1" height="1" fill="#808080"/><rect x="13" y="30" width="1" height="1" fill="#00ffff"/><rect x="17" y="31" width="1" height="1" fill="#fff"/><rect x="12" y="24" width="1" height="1" fill="#808080"/><rect x="12" y="23" width="1" height="1" fill="#fff"/><rect x="12" y="21" width="1" height="1" fill="#fff"/><rect x="13" y="25" width="1" height="1" fill="#00ffff"/><rect x="18" y="24" width="1" height="1" fill="#00ffff"/><rect x="17" y="32" width="1" height="1" fill="#00ffff"/><rect x="21" y="24" width="1" height="1" fill="#00ffff"/><rect x="22" y="30" width="1" height="1" fill="#00c0c0"/><rect x="17" y="27" width="1" height="1" fill="#808080"/><rect x="14" y="28" width="1" height="1" fill="#fff"/><rect x="12" y="28" width="1" height="1" fill="#00ffff"/><rect x="16" y="34" width="1" height="1" fill="#808080"/><rect x="18" y="17" width="1" height="1" fill="#808080"/><rect x="16" y="33" width="1" height="1" fill="#00c0c0"/><rect x="15" y="33" width="1" height="1" fill="#00ffff"/><rect x="12" y="24" width="1" height="1" fill="#00ffff"/><rect x="12" y="25" width="1" height="1" fill="#fff"/><rect x="11" y="22" width="1" height="1" fill="#fff"/><rect x="13" y="30" width="1" height="1" fill="#fff"/><rect x="17" y="21" width="1" height="1" fill="#00c0c0"/><rect x="19" y="32" width="1" height="1" fill="#fff"/><rect x="12" y="25" width="1" height="1" fill="#00ffff"/><rect x="22" y="22" width="1" height="1" fill="#808080"/><rect x="12" y="25" width="1" height="1" fill="#00ffff"/><rect x="21" y="19" width="1" height="1" fill="#fff"/><rect x="12" y="24" width="1" height="1" fill="#00ffff"/><rect x="15" y="20" width="1" height="1" fill="#808080"/><rect x="11" y="27" width="1" height="1" fill="#00c0c0"/><rect x="17" y="25" width="1" height="1" fill="#00c0c0"/><rect x="13" y="18" width="1" height="1" fill="#00c0c0"/><rect x="22" y="24" width="1" height="1" fill="#00ffff"/><rect x="13" y="25" width="1" height="1" fill="#00ffff"/><rect x="13" y="23" width="1" height="1" fill="#fff"/><rect x="21" y="26" width="1" height="1" fill="#00c0c0"/><rect x="14" y="26" width="1" height="1" fill="#808080"/><rect x="19" y="22" width="1" height="1" fill="#fff"/><rect x="16" y="17" width="1" height="1" fill="#fff"/><rect x="11" y="17" width="1" height="1" fill="#00ffff"/><rect x="22" y="33" width="1" height="1" fill="#00c0c0"/><rect x="14" y="33" width="1" height="1" fill="#808080"/><rect x="14" y="31" width="1" height="1" fill="#00ffff"/><rect x="21" y="30" width="1" height="1" fill="#808080"/><rect x="19" y="29" width="1" height="1" fill="#00c0c0"/><rect x="15" y="23" width="1" height="1" fill="#00ffff"/><rect x="16" y="23" width="1" height="1" fill="#00ffff"/><rect x="17" y="28" width="1" height="1" fill="#00ffff"/><rect x="13" y="17" width="1" height="1" fill="#00ffff"/><rect x="21" y="25" width="1" height="1" fill="#808080"/><rect x="13" y="18" width="1" height="1" fill="#00ffff"/><rect x="21" y="29" width="1" height="1" fill="#00c0c0"/><rect x="21" y="26" width="1" height="1" fill="#00c0c0"/><rect x="14" y="26" width="1" height="1" fill="#00ffff"/><rect x="18" y="22" width="1" height="1" fill="#00ffff"/><rect x="15" y="31" width="1" height="1" fill="#00ffff"/><rect x="15" y="28" width="1" height="1" fill="#fff"/><rect x="19" y="27" width="1" height="1" fill="#00ffff"/><rect x="11" y="26" width="1" height="1" fill="#00ffff"/><rect x="16" y="22" width="1" height="1" fill="#00ffff"/><rect x="16" y="29" width="1" height="1" fill="#00ffff"/><rect x="18" y="25" width="1" height="1" fill="#00c0c0"/><rect x="21" y="23" width="1" height="1" fill="#00ffff"/><rect x="19" y="17" width="1" height="1" fill="#00ffff"/><rect x="15" y="19" width="1" height="1" fill="#00ffff"/><rect x="17" y="18" width="1" height="1" fill="#808080"/><rect x="11" y="26" width="1" height="1" fill="#fff"/><rect x="21" y="24" width="1" height="1" fill="#00ffff"/><rect x="20" y="33" width="1" height="1" fill="#00ffff"/><rect x="21" y="29" width="1" height="1" fill="#fff"/><rect x="22" y="32" width="1" height="1" fill="#00ffff"/><rect x="15" y="21" width="1" height="1" fill="#00ffff"/><rect x="22" y="33" width="1" height="1" fill="#808080"/><rect x="22" y="33" width="1" height="1" fill="#00ffff"/><rect x="19" y="33" width="1" height="1" fill="#00c0c0"/><rect x="11" y="24" width="1" height="1" fill="#00ffff"/><rect x="11" y="18" width="1" height="1" fill="#00ffff"/><rect x="21" y="28" width="1" height="1" fill="#00ffff"/><rect x="17" y="31" width="1" height="1" fill="#00c0c0"/><rect x="11" y="17" width="1" height="1" fill="#00c0c0"/><rect x="21" y="24" width="1" height="1" fill="#808080"/><rect x="15" y="17" width="1" height="1" fill="#808080"/><rect x="12" y="33" width="1" height="1" fill="#00c0c0"/><rect x="12" y="33" width="1" height="1" fill="#00ffff"/><rect x="22" y="32" width="1" height="1" fill="#fff"/><rect x="12" y="25" width="1" height="1" fill="#00ffff"/><rect x="22" y="23" width="1" height="1" fill="#00ffff"/><rect x="22" y="31" width="1" height="1" fill="#808080"/><rect x="17" y="19" width="1" height="1" fill="#808080"/><rect x="21" y="26" width="1" height="1" fill="#00ffff"/><rect x="20" y="23" width="1" height="1" fill="#00ffff"/><rect x="20" y="21" width="1" height="1" fill="#fff"/><rect x="15" y="26" width="1" height="1" fill="#00c0c0"/><rect x="20" y="21" width="1" height="1" fill="#00ffff"/><rect x="18" y="18" width="1" height="1" fill="#808080"/><rect x="15" y="20" width="1" height="1" fill="#00ffff"/><rect x="21" y="32" width="1" height="1" fill="#fff"/><rect x="22" y="33" width="1" height="1" fill="#fff"/><rect x="18" y="31" width="1" height="1" fill="#808080"/><rect x="12" y="34" width="1" height="1" fill="#00ffff"/><rect x="15" y="19" width="1" height="1" fill="#808080"/><rect x="11" y="26" width="1" height="1" fill="#808080"/><rect x="12" y="33" width="1" height="1" fill="#808080"/><rect x="15" y="29" width="1" height="1" fill="#00ffff"/><rect x="14" y="19" width="1" height="1" fill="#00c0c0"/><rect x="12" y="21" width="1" height="1" fill="#00c0c0"/><rect x="15" y="28" width="1" height="1" fill="#00ffff"/><rect x="20" y="33" width="1" height="1" fill="#fff"/><rect x="12" y="28" width="1" height="1" fill="#00ffff"/><rect x="18" y="32" width="1" height="1" fill="#808080"/><rect x="11" y="22" width="1" height="1" fill="#00ffff"/><rect x="18" y="31" width="1" height="1" fill="#808080"/><rect x="15" y="21" width="1" height="1" fill="#808080"/><rect x="16" y="29" width="1" height="1" fill="#fff"/><rect x="12" y="27" width="1" height="1" fill="#00ffff"/><rect x="16" y="27" width="1" height="1" fill="#808080"/><rect x="12" y="23" width="1" height="1" fill="#00ffff"/><rect x="22" y="26" width="1" height="1" fill="#fff"/><rect x="16" y="19" width="1" height="1" fill="#808080"/><rect x="17" y="19" width="1" height="1" fill="#fff"/><rect x="17" y="25" width="1" height="1" fill="#00ffff"/><rect x="15" y="20" width="1" height="1" fill="#00ffff"/><rect x="21" y="26" width="1" height="1" fill="#00ffff"/><rect x="14" y="25" width="1" height="1" fill="#808080"/><rect x="19" y="27" width="1" height="1" fill="#00ffff"/><rect x="16" y="30" width="1" height="1" fill="#00ffff"/><rect x="21" y="29" width="1" height="1" fill="#00c0c0"/><rect x="19" y="23" width="1" height="1" fill="#00ffff"/><rect x="11" y="30" width="1" height="1" fill="#808080"/><rect x="20" y="21" width="1" height="1" fill="#fff"/><rect x="18" y="18" width="1" height="1" fill="#00c0c0"/><rect x="13" y="22" width="1" height="1" fill="#808080"/><rect x="17" y="27" width="1" height="1" fill="#fff"/><rect x="15" y="25" width="1" height="1" fill="#fff"/><rect x="17" y="24" width="1" height="1" fill="#fff"/><rect x="18" y="34" width="1" height="1" fill="#808080"/><rect x="12" y="22" width="1" height="1" fill="#00ffff"/><rect x="12" y="23" width="1" height="1" fill="#00c0c0"/><rect x="18" y="34" width="1" height="1" fill="#00ffff"/><rect x="18" y="27" width="1" height="1" fill="#808080"/><rect x="17" y="21" width="1" height="1" fill="#00c0c0"/><rect x="14" y="24" width="1" height="1" fill="#00ffff"/><rect x="13" y="27" width="1" height="1" fill="#00c0c0"/><rect x="12" y="27" width="1" height="1" fill="#00ffff"/><rect x="16" y="25" width="1" height="1" fill="#00c0c0"/><rect x="14" y="17" width="1" height="1" fill="#808080"/><rect x="17" y="30" width="1" height="1" fill="#00c0c0"/><rect x="14" y="29" width="1" height="1" fill="#fff"/><rect x="16" y="18" width="1" height="1" fill="#808080"/><rect x="15" y="28" width="1" height="1" fill="#00ffff"/><rect x="21" y="33" width="1" height="1" fill="#00c0c0"/><rect x="21" y="23" width="1" height="1" fill="#00ffff"/><rect x="15" y="24" width="1" height="1" fill="#808080"/><rect x="17" y="31" width="1" height="1" fill="#808080"/><rect x="15" y="17" width="1" height="1" fill="#00ffff"/></svg>
<svg style="position:absolute;left:378px;top:243px" width="38" height="36" viewBox="0 0 38 36" shape-rendering="crispEdges"><path d="M18 2 L21 6 V9 L25 13 H11 L15 9 V6 Z" fill="#00c0c0" stroke="#000" stroke-width="0.8" shape-rendering="auto"/><rect x="16" y="13" width="4" height="2" fill="#ffff00"/><path d="M21 6 L30 10 L27 20" stroke="#00c0c0" stroke-width="2" fill="none" shape-rendering="auto"/><rect x="25" y="19" width="5" height="3" fill="#00a0a0"/><path d="M6 20 H35 L30 34 H1 Z" fill="#c0c0c0" stroke="#808080" shape-rendering="auto"/><path d="M1 31 H30 L35 20" stroke="#000" fill="none"/><rect x="1" y="30" width="29" height="3" fill="#fff"/><path d="M1 34 H30 L35 24 V20" stroke="#000" stroke-width="1.2" fill="none"/><path d="M6 22 H14 L12 28 H4 Z" fill="#fff" stroke="#000" stroke-width="0.7"/><path d="M17 22 H26 L24 27 H15 Z" fill="url(#dy)"/><path d="M9 24 L14 30" stroke="#c0c000" stroke-width="1.5" shape-rendering="auto"/><rect x="13" y="29" width="2" height="2" fill="#c00000"/></svg>
<svg style="position:absolute;left:380px;top:332px" width="32" height="32" viewBox="0 0 32 32" shape-rendering="crispEdges"><rect width="32" height="15" fill="#00ffff"/><rect y="15" width="32" height="17" fill="#0000ff"/><circle cx="6" cy="5" r="3.2" fill="#ffff00" shape-rendering="auto"/><rect x="15" y="30" width="1" height="1" fill="#fff"/><rect x="15" y="26" width="1" height="1" fill="#fff"/><rect x="6" y="30" width="1" height="1" fill="#fff"/><rect x="21" y="18" width="1" height="1" fill="#fff"/><rect x="4" y="30" width="1" height="1" fill="#fff"/><rect x="10" y="18" width="1" height="1" fill="#fff"/><rect x="3" y="16" width="1" height="1" fill="#fff"/><rect x="20" y="29" width="1" height="1" fill="#fff"/><rect x="15" y="18" width="1" height="1" fill="#fff"/><rect x="20" y="16" width="1" height="1" fill="#fff"/><rect x="27" y="17" width="1" height="1" fill="#fff"/><rect x="2" y="16" width="1" height="1" fill="#fff"/><rect x="7" y="26" width="1" height="1" fill="#fff"/><rect x="20" y="16" width="1" height="1" fill="#fff"/><rect x="25" y="30" width="1" height="1" fill="#fff"/><rect x="11" y="30" width="1" height="1" fill="#fff"/><path d="M1 22 L4 19 L12 18 L19 17 L22 12 L24 7 L23 5 L26 5 L26 11 L24 17 L29 19 L30 23 L26 25 L20 25 L14 24 L4 24 Z" fill="#800000"/><path d="M11 8 Q14 2 20 2 L23 1 Q28 0 31 5 L32 12 L29 7 Q26 4 24 5 L22 4 Q18 4 16 7 L13 12 Z" fill="#008000"/><path d="M18 6 L16 11 M26 5 L31 10" stroke="#008000" stroke-width="1.5"/><rect x="15" y="7" width="2" height="2" fill="#800000"/><rect x="19" y="7" width="2" height="2" fill="#800000"/><rect x="22" y="4" width="3" height="3" fill="#800000"/></svg>
<svg style="position:absolute;left:380px;top:411px" width="36" height="28" viewBox="0 0 36 28" shape-rendering="crispEdges"><path d="M2 9 L6 8 L13 1 V26 L6 19 L2 18 Z" fill="url(#dy)" stroke="#000" stroke-width="1.2" shape-rendering="auto"/><ellipse cx="15" cy="13.5" rx="2.8" ry="12.5" fill="#fff" stroke="#000" stroke-width="1.2" shape-rendering="auto"/><rect x="13" y="10" width="3" height="6" fill="#808080"/><path d="M20 7 Q22 13.5 20 20 M26 6 Q28.5 13.5 26 21" stroke="#000" stroke-width="1.2" fill="none" shape-rendering="auto"/><rect x="17" y="13" width="1" height="1" fill="#00f"/><rect x="21" y="12" width="1" height="1" fill="#00f"/><rect x="23" y="13" width="1" height="1" fill="#00f"/><rect x="29" y="13" width="1" height="1" fill="#00f"/><rect x="31" y="12" width="1" height="1" fill="#00f"/></svg>
<svg style="position:absolute;left:351px;top:487px" width="34" height="19" viewBox="0 0 34 19" shape-rendering="crispEdges"><path d="M1 9 L16 1 L33 9.5 L18 17 Z" fill="#c0c0c0" stroke="#000" stroke-width="1.5" shape-rendering="auto"/><path d="M5 9 L16 3 L23 7 L12 13 Z" fill="#fff" shape-rendering="auto"/><path d="M20 12 L25 10 M19 14 L23 12" stroke="#000" shape-rendering="auto"/><rect x="24" y="11" width="2" height="2" fill="#fff"/></svg>
<svg style="position:absolute;left:422px;top:480px" width="38" height="34" viewBox="0 0 38 34" shape-rendering="crispEdges"><rect x="16.5" y="1.5" width="18" height="24" fill="url(#dw)" stroke="#000" stroke-width="1.5"/><path d="M17 2 L20 5 H31 L34 2 M17 25 L20 22 H31 L34 25" stroke="#fff" fill="none"/><rect x="19" y="5" width="1" height="17" fill="#fff"/><circle cx="25" cy="13" r="2.8" fill="#a0a0a0" stroke="#000" stroke-width="1.5" shape-rendering="auto"/><path d="M12 14 L15 13 L17 14 L19 13" stroke="#f00" fill="none" shape-rendering="auto"/><path d="M1 17 L4 16 L8 14 L12 14" stroke="#00f" stroke-width="1.2" fill="none" shape-rendering="auto"/><path d="M5 13 L8 11 L11 13" stroke="#0c0" fill="none" shape-rendering="auto"/><path d="M10 10 L12 14 L12 9" stroke="#ff0" fill="none" shape-rendering="auto"/><path d="M12 15 V27 L9 31 L3 32" stroke="#808080" stroke-width="2" fill="none" shape-rendering="auto"/></svg>
</body></html>
